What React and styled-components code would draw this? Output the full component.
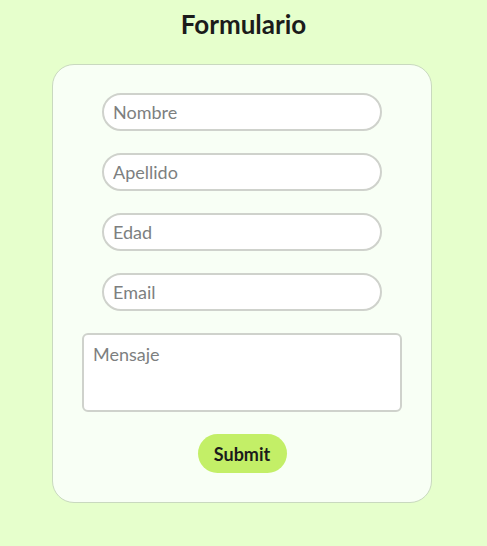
import React from "react";
import styled, { createGlobalStyle } from "styled-components";

const GlobalStyle = createGlobalStyle`
  html, body {
    margin: 0;
    padding: 0;
    background: #e6ffcc;
    font-family: Lato, "Open Sans", sans-serif;
  }
`;

const Page = styled.div`
  padding-top: 8px;
  padding-bottom: 40px;
`;

const Title = styled.h1`
  margin: 0 0 24px;
  text-align: center;
  font-size: 26px;
  font-weight: 700;
  color: #1b1b1b;
  line-height: 32px;
`;

const Card = styled.form`
  width: 380px;
  box-sizing: border-box;
  margin-left: 52px;
  padding: 28px 0 29px;
  background: #f8fff5;
  border: 1px solid #c9d9bf;
  border-radius: 22px;
  display: flex;
  flex-direction: column;
  align-items: center;
  gap: 22px;
`;

const Input = styled.input`
  width: 280px;
  height: 38px;
  box-sizing: border-box;
  padding: 0 9px;
  border: 2px solid #cfd2cc;
  border-radius: 19px;
  background: #fff;
  font-family: inherit;
  font-size: 18px;
  outline: none;
  &::placeholder {
    color: #7d7f80;
  }
`;

const TextArea = styled.textarea`
  width: 320px;
  height: 79px;
  box-sizing: border-box;
  padding: 8px 9px;
  border: 2px solid #cfd2cc;
  border-radius: 6px;
  background: #fff;
  font-family: inherit;
  font-size: 18px;
  resize: none;
  outline: none;
  &::placeholder {
    color: #7d7f80;
  }
`;

const Button = styled.button`
  width: 89px;
  height: 39px;
  border: none;
  border-radius: 20px;
  background: #c3ef67;
  color: #1b1b1b;
  font-family: inherit;
  font-size: 18px;
  font-weight: 700;
  cursor: pointer;
`;

const fields = ["Nombre", "Apellido", "Edad", "Email"];

const App = () => {
  return (
    <Page>
      <GlobalStyle />
      <Title>Formulario</Title>
      <Card onSubmit={(e) => e.preventDefault()}>
        {fields.map((f) => (
          <Input key={f} placeholder={f} />
        ))}
        <TextArea placeholder="Mensaje" />
        <Button type="submit">Submit</Button>
      </Card>
    </Page>
  );
};

export default App;
